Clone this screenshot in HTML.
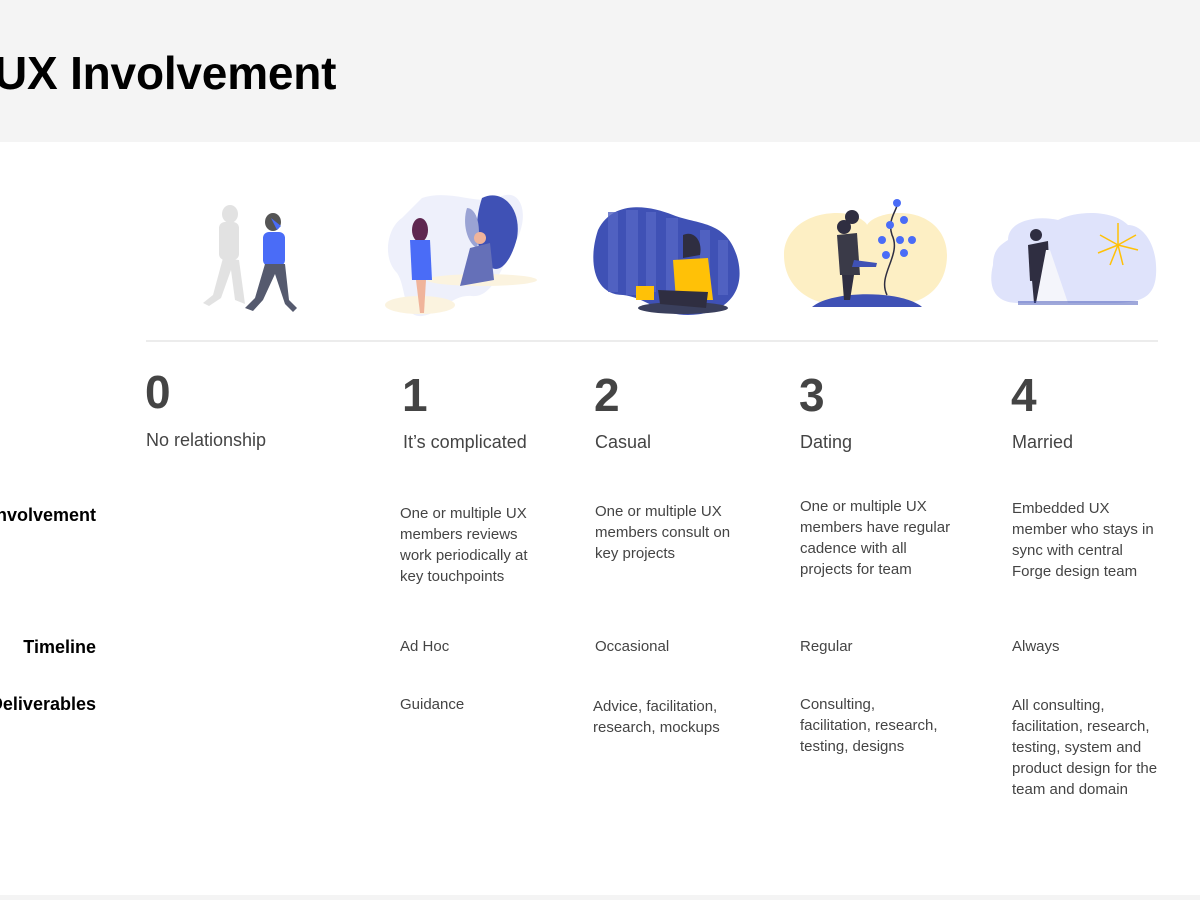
<!DOCTYPE html>
<html><head><meta charset="utf-8"><style>
body{margin:0;width:1200px;height:900px;overflow:hidden;background:#fff;font-family:"Liberation Sans",Arial,sans-serif;color:#444;position:relative}
.hdr{position:absolute;left:0;top:0;width:1200px;height:142px;background:#f4f4f4}
.ftr{position:absolute;left:0;top:895px;width:1200px;height:5px;background:#f4f4f4}
h1{position:absolute;left:-6px;top:46px;margin:0;font-size:46px;font-weight:bold;color:#000;letter-spacing:-0.2px}
.a{position:absolute;white-space:nowrap}
.num{font-size:46px;font-weight:bold;color:#444}
.sub{font-size:18px;color:#444}
.t{font-size:15px;line-height:21px;color:#444}
.lbl{font-size:18px;font-weight:bold;color:#000;text-align:right;right:1104px}
.line{position:absolute;left:146px;top:340px;width:1012px;height:2px;background:#ececec}
</style></head><body>
<div class="hdr"></div><div class="ftr"></div>
<h1>UX Involvement</h1>

<svg class="a" style="left:195px;top:200px" width="110" height="120" viewBox="0 0 110 120">
<g fill="#e2e2e2"><ellipse cx="35" cy="14" rx="8" ry="9"/><rect x="24" y="22" width="20" height="38" rx="6"/><path d="M28 58 L18 95 L8 103 L14 106 L26 98 L36 70 L40 100 L50 104 L44 60Z"/></g>
<g><ellipse cx="78" cy="22" rx="8" ry="9" fill="#555"/><path d="M76 18 l10 8 -4 4z" fill="#4a6cf7"/><rect x="68" y="32" width="22" height="34" rx="6" fill="#4a6cf7"/><path d="M70 64 L60 98 L50 108 L58 111 L68 100 L80 74 L90 104 L98 112 L102 108 L94 100 L90 64Z" fill="#555a6e"/></g>
</svg>
<svg class="a" style="left:382px;top:188px" width="160" height="135" viewBox="0 0 160 135">
<path d="M40 10 C70 0 100 20 120 8 C140 0 150 30 130 60 C120 80 110 110 90 108 C70 106 60 125 40 128 C20 130 25 100 15 85 C0 70 5 40 20 30Z" fill="#eef0fb"/>
<ellipse cx="100" cy="92" rx="55" ry="6" fill="#fbf3df"/><ellipse cx="38" cy="117" rx="35" ry="9" fill="#fbf3df"/>
<path d="M100 10 C120 0 140 20 135 50 C130 70 120 85 110 80 C95 70 90 40 100 10Z" fill="#3f51b5"/>
<path d="M85 20 C95 20 100 40 95 60 C85 55 80 35 85 20Z" fill="#9aa3d4"/>
<ellipse cx="38" cy="42" rx="8" ry="12" fill="#5e2750"/><path d="M28 52 L48 52 L50 92 L30 92Z" fill="#4a6cf7"/><path d="M34 92 L38 125 L42 125 L44 92Z" fill="#f0b49b"/>
<path d="M88 60 L108 55 L112 92 L78 98Z" fill="#6570b8"/><circle cx="98" cy="50" r="6" fill="#f0b49b"/>
</svg>
<svg class="a" style="left:588px;top:200px" width="155" height="118" viewBox="0 0 155 118">
<path d="M10 30 C25 0 60 5 85 15 C110 25 140 20 150 60 C158 95 135 115 100 115 C70 115 60 98 35 95 C5 95 0 60 10 30Z" fill="#3f51b5"/>
<g fill="#5565c4" opacity=".8"><rect x="20" y="12" width="10" height="80"/><rect x="38" y="10" width="12" height="85"/><rect x="58" y="12" width="10" height="80"/><rect x="78" y="18" width="12" height="78"/><rect x="112" y="30" width="10" height="66"/><rect x="130" y="40" width="10" height="55"/></g>
<ellipse cx="95" cy="108" rx="45" ry="6" fill="#3a3f5c"/>
<path d="M95 35 C105 30 115 40 112 55 L95 58Z" fill="#2f2e41"/><path d="M85 60 L120 58 L125 100 L88 100Z" fill="#ffc107"/><path d="M70 90 L120 92 L118 108 L72 104Z" fill="#2f2e41"/><rect x="48" y="86" width="18" height="14" fill="#ffc107"/>
</svg>
<svg class="a" style="left:782px;top:195px" width="168" height="115" viewBox="0 0 168 115">
<path d="M55 18 C75 18 85 28 85 30 C90 22 105 18 118 18 C145 18 165 35 165 60 C165 90 145 110 110 110 L60 110 C25 110 2 90 2 60 C2 35 25 18 55 18Z" fill="#fdefc4"/>
<path d="M30 112 C50 95 120 95 140 112Z" fill="#3f51b5"/>
<path d="M55 40 L75 38 L78 80 L58 80Z" fill="#3a3a48"/><path d="M60 80 L62 105 L68 105 L72 80Z" fill="#2f2e41"/><circle cx="62" cy="32" r="7" fill="#2f2e41"/><circle cx="70" cy="22" r="7" fill="#2f2e41"/><path d="M72 65 L95 68 L94 72 L70 72Z" fill="#3f51b5"/>
<path d="M105 100 C95 80 120 60 110 40 C105 25 115 15 115 10" stroke="#2f2e41" fill="none" stroke-width="1.5"/>
<g fill="#4a6cf7"><circle cx="115" cy="8" r="4"/><circle cx="122" cy="25" r="4"/><circle cx="108" cy="30" r="4"/><circle cx="100" cy="45" r="4"/><circle cx="118" cy="45" r="4"/><circle cx="130" cy="45" r="4"/><circle cx="104" cy="60" r="4"/><circle cx="122" cy="58" r="4"/></g>
</svg>
<svg class="a" style="left:988px;top:205px" width="172" height="102" viewBox="0 0 172 102">
<path d="M20 35 C20 15 50 10 70 15 C90 5 125 5 140 20 C155 20 170 40 168 70 C166 95 150 98 120 98 L30 98 C5 98 0 80 5 60 C5 45 12 40 20 35Z" fill="#dfe3fb"/>
<path d="M40 40 L60 36 L62 75 L42 76Z" fill="#2f2e41"/><path d="M44 75 L46 98 L52 98 L54 75Z" fill="#2f2e41"/><circle cx="48" cy="30" r="6" fill="#2f2e41"/>
<path d="M58 45 L62 45 L80 98 L48 98Z" fill="#f4f5fb"/>
<g stroke="#ffc107" stroke-width="1.5"><line x1="130" y1="40" x2="130" y2="18"/><line x1="130" y1="40" x2="148" y2="30"/><line x1="130" y1="40" x2="112" y2="30"/><line x1="130" y1="40" x2="150" y2="45"/><line x1="130" y1="40" x2="110" y2="48"/><line x1="130" y1="40" x2="135" y2="60"/><line x1="130" y1="40" x2="122" y2="60"/></g>
<rect x="30" y="96" width="120" height="4" fill="#3f51b5" opacity=".5"/>
</svg>

<div class="line"></div>

<div class="a num" style="left:145px;top:365px">0</div>
<div class="a num" style="left:402px;top:368px">1</div>
<div class="a num" style="left:594px;top:368px">2</div>
<div class="a num" style="left:799px;top:368px">3</div>
<div class="a num" style="left:1011px;top:368px">4</div>

<div class="a sub" style="left:146px;top:430px">No relationship</div>
<div class="a sub" style="left:403px;top:432px">It’s complicated</div>
<div class="a sub" style="left:595px;top:432px">Casual</div>
<div class="a sub" style="left:800px;top:432px">Dating</div>
<div class="a sub" style="left:1012px;top:432px">Married</div>

<div class="a lbl" style="top:505px">Involvement</div>
<div class="a lbl" style="top:637px">Timeline</div>
<div class="a lbl" style="top:694px">Deliverables</div>

<div class="a t" style="left:400px;top:503px">One or multiple UX<br>members reviews<br>work periodically at<br>key touchpoints</div>
<div class="a t" style="left:595px;top:501px">One or multiple UX<br>members consult on<br>key projects</div>
<div class="a t" style="left:800px;top:496px">One or multiple UX<br>members have regular<br>cadence with all<br>projects for team</div>
<div class="a t" style="left:1012px;top:498px">Embedded UX<br>member who stays in<br>sync with central<br>Forge design team</div>

<div class="a t" style="left:400px;top:636px">Ad Hoc</div>
<div class="a t" style="left:595px;top:636px">Occasional</div>
<div class="a t" style="left:800px;top:636px">Regular</div>
<div class="a t" style="left:1012px;top:636px">Always</div>

<div class="a t" style="left:400px;top:694px">Guidance</div>
<div class="a t" style="left:593px;top:696px">Advice, facilitation,<br>research, mockups</div>
<div class="a t" style="left:800px;top:694px">Consulting,<br>facilitation, research,<br>testing, designs</div>
<div class="a t" style="left:1012px;top:695px">All consulting,<br>facilitation, research,<br>testing, system and<br>product design for the<br>team and domain</div>
</body></html>
